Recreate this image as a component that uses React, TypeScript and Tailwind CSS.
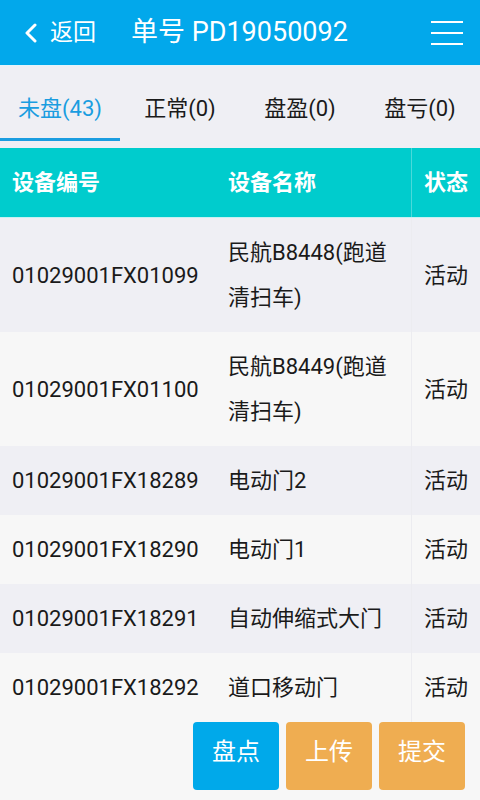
import React from "react";

const rows = [
  { code: "01029001FX01099", name: "民航B8448(跑道清扫车)", status: "活动" },
  { code: "01029001FX01100", name: "民航B8449(跑道清扫车)", status: "活动" },
  { code: "01029001FX18289", name: "电动门2", status: "活动" },
  { code: "01029001FX18290", name: "电动门1", status: "活动" },
  { code: "01029001FX18291", name: "自动伸缩式大门", status: "活动" },
  { code: "01029001FX18292", name: "道口移动门", status: "活动" },
];

const tabs = ["未盘(43)", "正常(0)", "盘盈(0)", "盘亏(0)"];

export default function App() {
  return (
    <div
      className="w-[480px] h-[800px] bg-[#f7f7f7] overflow-hidden flex flex-col"
      style={{ fontFamily: '"Roboto", "Noto Sans CJK SC", sans-serif' }}
    >
      {/* top bar */}
      <div className="h-[65px] bg-[#02a8eb] flex items-center text-white shrink-0">
        <svg width="16" height="20" viewBox="0 0 16 20" className="ml-[23px]">
          <path d="M12 2 L4 10 L12 18" fill="none" stroke="white" strokeWidth="3" strokeLinecap="round" strokeLinejoin="round" />
        </svg>
        <span className="ml-[11px] text-[23px] leading-none">返回</span>
        <span className="ml-[35px] text-[27px] leading-none">单号 PD19050092</span>
        <svg width="34" height="26" viewBox="0 0 34 26" className="ml-auto mr-[16px]">
          <rect x="1" y="1" width="32" height="2" fill="white" />
          <rect x="1" y="12" width="32" height="2" fill="white" />
          <rect x="1" y="23" width="32" height="2" fill="white" />
        </svg>
      </div>

      {/* tabs */}
      <div className="h-[83px] bg-[#efeff4] pt-px shrink-0 grid grid-cols-4 border-t border-[#e4f4fb]">
        {tabs.map((t, i) => (
          <div key={t} className="flex flex-col items-center h-[74px]">
            <span
              className={
                "mt-[27px] text-[22px] leading-[30px] " +
                (i === 0 ? "text-[#1a9de0]" : "text-[#1a1a1a]")
              }
            >
              {t}
            </span>
            <div className={"mt-auto w-full h-[3px] " + (i === 0 ? "bg-[#1a9de0]" : "")} />
          </div>
        ))}
      </div>

      {/* table header */}
      <div className="grid grid-cols-[216px_195px_69px] h-[70px] bg-[#00cccd] text-white font-bold text-[22px] border-b border-[#c8f1f2] shrink-0">
        <div className="flex items-center pl-[12px]">设备编号</div>
        <div className="flex items-center pl-[12px]">设备名称</div>
        <div className="flex items-center pl-[12px] border-l border-[#4ad9da]">状态</div>
      </div>

      {/* rows */}
      <div className="flex flex-col">
        {rows.map((r, i) => (
          <div
            key={r.code}
            className={
              "grid grid-cols-[216px_195px_69px] text-[22px] leading-[45px] text-[#1a1a1a] " +
              (i % 2 === 0 ? "bg-[#efeff4]" : "bg-[#f7f7f7]")
            }
          >
            <div className="flex items-center pl-[12px] py-[12px] whitespace-nowrap">{r.code}</div>
            <div className="flex items-center pl-[12px] pr-[10px] py-[12px] break-all">{r.name}</div>
            <div className="flex items-center pl-[12px] py-[12px] border-l border-[#ececf0]">{r.status}</div>
          </div>
        ))}
      </div>

      {/* actions */}
      <div className="flex justify-end gap-[7px] pr-[15px] text-white text-[24px]">
        <button className="w-[86px] h-[68px] rounded-[4px] bg-[#00a9ea] pb-[8px]">盘点</button>
        <button className="w-[86px] h-[68px] rounded-[4px] bg-[#efad51] pb-[8px]">上传</button>
        <button className="w-[86px] h-[68px] rounded-[4px] bg-[#efad51] pb-[8px]">提交</button>
      </div>
    </div>
  );
}
